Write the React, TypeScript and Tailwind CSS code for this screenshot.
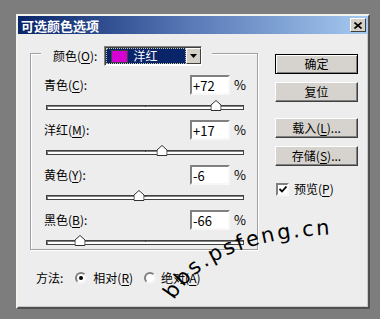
import React from "react";

const rows = [
  { name: "青色", key: "C", value: 72 },
  { name: "洋红", key: "M", value: 17 },
  { name: "黄色", key: "Y", value: -6 },
  { name: "黑色", key: "B", value: -66 },
];

const font = { fontFamily: '"Noto Sans CJK SC", sans-serif' };

function Thumb() {
  return (
    <svg width="11" height="11" viewBox="0 0 11 11" className="block">
      <path d="M0.5 10.5 V5 L5.5 0.5 L10.5 5 V10.5 Z" fill="#fff" stroke="#303030" />
    </svg>
  );
}

function Slider({ value }: { value: number }) {
  // -100..100 on the track
  const pct = ((value + 100) / 200) * 100;
  return (
    <div className="relative mt-[10px] ml-[2px] h-[5px] w-[198px] border border-[#404040] bg-white shadow-[inset_1px_1px_0_#808080]">
      <div className="absolute left-1/2 top-[-1px] h-[2px] w-[1px] bg-[#404040]" />
      <div className="absolute top-[-6px] -translate-x-1/2" style={{ left: `${pct}%` }}>
        <Thumb />
      </div>
    </div>
  );
}

function Key({ k }: { k: string }) {
  return <span className="underline underline-offset-[2px]">{k}</span>;
}

function Btn({ label, k, main }: { label: string; k?: string; main?: boolean }) {
  return (
    <div
      className={`flex h-[20px] w-[83px] items-center justify-center bg-[#d6d3ce] text-[12px] text-black border ${
        main
          ? "border-black shadow-[inset_1px_1px_0_#fff,inset_-1px_-1px_0_#808080]"
          : "border-t-white border-l-white border-b-[#404040] border-r-[#404040] shadow-[inset_-1px_-1px_0_#808080]"
      }`}
    >
      {label}
      {k && (
        <>
          (<Key k={k} />)...
        </>
      )}
    </div>
  );
}

function Radio({ on }: { on?: boolean }) {
  return (
    <div className="flex h-[12px] w-[12px] items-center justify-center rounded-full border-2 border-t-[#808080] border-l-[#808080] border-b-[#f4f4f4] border-r-[#f4f4f4] bg-white">
      {on && <div className="h-[4px] w-[4px] rounded-full bg-black" />}
    </div>
  );
}

export default function App() {
  return (
    <div className="relative h-[319px] w-[380px] overflow-hidden bg-[#7d7d7d] pl-[16px] pt-[14px]" style={font}>
      <div className="flex h-[295px] w-[354px] flex-col border-2 border-t-[#f2f2ec] border-l-[#f2f2ec] border-b-[#505050] border-r-[#505050] bg-[#ededed] shadow-[inset_-1px_-1px_0_#c8c8c8]">
        {/* title bar */}
        <div className="flex h-[18px] items-center justify-between bg-gradient-to-r from-[#0a246a] via-[#5a7ab8] to-[#a6caf0] pl-[3px] pr-[2px]">
          <span className="text-[13px] font-bold leading-none text-white">可选颜色选项</span>
          <div className="flex h-[14px] w-[16px] items-center justify-center border border-t-white border-l-white border-b-[#404040] border-r-[#404040] bg-[#d4d0c8]">
            <svg width="8" height="7" viewBox="0 0 8 7">
              <path d="M0.5 0.5 L7.5 6.5 M7.5 0.5 L0.5 6.5" stroke="#000" strokeWidth="1.6" />
            </svg>
          </div>
        </div>

        <div className="flex">
          {/* left column */}
          <div className="flex flex-col pl-[12px] pt-[19px]">
            <div className="h-[197px] w-[228px] border border-[#a0a0a0] shadow-[inset_1px_1px_0_#fff,1px_1px_0_#fff]">
              <div className="-mt-[8px] ml-[10px] flex h-[20px] w-fit items-center bg-[#ededed] pl-[12px] pr-[10px] text-[12px] text-black">
                <span className="mr-[7px]">
                  颜色(<Key k="O" />):
                </span>
                <div className="flex h-[20px] w-[98px] items-center border border-t-[#808080] border-l-[#808080] border-b-white border-r-white bg-white shadow-[inset_1px_1px_0_#404040]">
                  <div className="ml-[1px] flex h-[16px] flex-1 items-center border border-dotted border-[#c8c8a0] bg-[#0a246a]">
                    <div className="ml-[4px] h-[13px] w-[17px] border border-[#404040] bg-[#d400d4]" />
                    <span className="ml-[5px] text-white">洋红</span>
                  </div>
                  <div className="flex h-[16px] w-[15px] items-center justify-center border border-t-white border-l-white border-b-[#404040] border-r-[#404040] bg-[#d4d0c8]">
                    <svg width="7" height="4" viewBox="0 0 7 4">
                      <path d="M0 0 H7 L3.5 4 Z" fill="#000" />
                    </svg>
                  </div>
                </div>
              </div>

              <div className="pl-[13px] pt-[9px]">
                {rows.map((r, i) => (
                  <div key={r.key} className={i > 0 ? "mt-[10px]" : ""}>
                    <div className="flex h-[20px] items-center text-[12px] text-black">
                      <span className="w-[146px]">
                        {r.name}(<Key k={r.key} />):
                      </span>
                      <div className="flex h-[20px] w-[40px] items-center border-2 border-t-[#808080] border-l-[#808080] border-b-[#f8f8f8] border-r-[#f8f8f8] bg-white pl-[1px] text-[13px] leading-none">
                        {r.value > 0 ? `+${r.value}` : r.value}
                      </div>
                      <span className="ml-[4px] text-[13px]">%</span>
                    </div>
                    <Slider value={r.value} />
                  </div>
                ))}
              </div>
            </div>

            <div className="ml-[6px] mt-[20px] flex h-[16px] items-center text-[12px] text-black">
              <span>方法:</span>
              <div className="ml-[12px]">
                <Radio on />
              </div>
              <span className="ml-[6px]">
                相对(<Key k="R" />)
              </span>
              <div className="ml-[11px]">
                <Radio />
              </div>
              <span className="ml-[5px]">
                绝对(<Key k="A" />)
              </span>
            </div>
          </div>

          {/* right column */}
          <div className="ml-[17px] flex flex-col pt-[20px]">
            <Btn label="确定" main />
            <div className="mt-[8px]">
              <Btn label="复位" />
            </div>
            <div className="mt-[16px]">
              <Btn label="载入" k="L" />
            </div>
            <div className="mt-[8px]">
              <Btn label="存储" k="S" />
            </div>
            <div className="ml-[1px] mt-[14px] flex items-center text-[12px] text-black">
              <div className="flex h-[13px] w-[13px] items-center justify-center border-2 border-t-[#808080] border-l-[#808080] border-b-[#f8f8f8] border-r-[#f8f8f8] bg-white">
                <svg width="8" height="7" viewBox="0 0 8 7">
                  <path d="M0.5 3 L3 5.5 L7.5 0.5" stroke="#000" strokeWidth="1.8" fill="none" />
                </svg>
              </div>
              <span className="ml-[5px]">
                预览(<Key k="P" />)
              </span>
            </div>
          </div>
        </div>
      </div>

      {/* watermark, set on an arc */}
      <svg className="pointer-events-none absolute left-0 top-0" width="380" height="319" viewBox="0 0 380 319">
        <defs>
          <path id="wm" d="M174 300 Q 211 238 340 234" fill="none" />
        </defs>
        <text fontFamily="DejaVu Sans, sans-serif" fontSize="21" fill="#000">
          <textPath href="#wm" textLength="176" lengthAdjust="spacing">
            bbs.psfeng.cn
          </textPath>
        </text>
      </svg>
    </div>
  );
}
